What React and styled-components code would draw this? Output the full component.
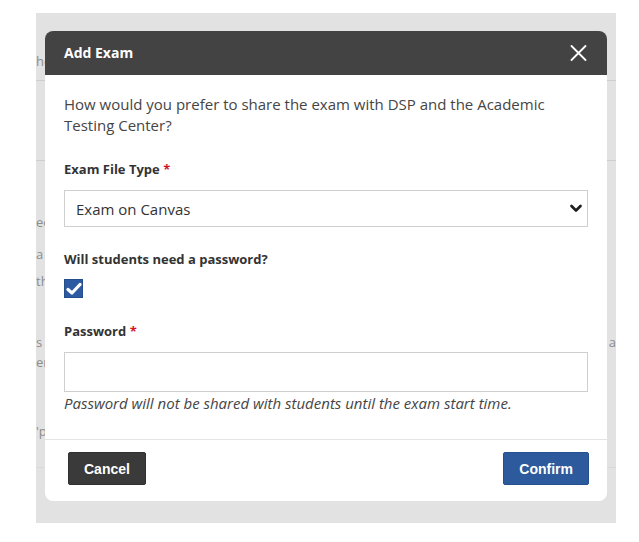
import React from "react";
import styled, { createGlobalStyle } from "styled-components";

const GlobalStyle = createGlobalStyle`
  html, body {
    margin: 0;
    padding: 0;
    background: #ffffff;
    font-family: "Open Sans", "Noto Sans", sans-serif;
  }
  * { box-sizing: border-box; }
`;

const Screen = styled.div`
  padding: 13px 0 0 36px;
`;

const Backdrop = styled.div`
  position: relative;
  width: 580px;
  height: 510px;
  background: #e2e2e2;
  overflow: hidden;
`;

/* page content sitting under the dimmed overlay */
const BehindPage = styled.div`
  display: flex;
  flex-direction: column;
  padding-top: 40px;
  font-size: 13px;
  line-height: 16px;
  color: #8c8c8c;
`;

const BehindRow = styled.div`
  display: flex;
  justify-content: space-between;
  height: 16px;
  margin-top: ${(p) => p.$gap || 0}px;
  white-space: nowrap;
`;

const BehindRule = styled.div`
  height: 1px;
  background: ${(p) => p.$tone || "#cdcdcd"};
  margin-top: ${(p) => p.$gap || 0}px;
`;

const Modal = styled.div`
  position: absolute;
  left: 9px;
  top: 18px;
  width: 562px;
  background: #ffffff;
  border-radius: 8px;
  display: flex;
  flex-direction: column;
`;

const Header = styled.div`
  height: 44px;
  background: #434343;
  border-radius: 8px 8px 0 0;
  display: flex;
  align-items: center;
  justify-content: space-between;
  padding: 0 19px 0 19px;
`;

const Title = styled.h2`
  margin: 0;
  font-size: 14px;
  font-weight: 700;
  color: #ffffff;
  line-height: 18px;
`;

const CloseButton = styled.button`
  border: 0;
  background: none;
  padding: 0;
  width: 20px;
  height: 20px;
  display: flex;
  align-items: center;
  justify-content: center;
  cursor: pointer;
`;

const Body = styled.div`
  display: flex;
  flex-direction: column;
  padding: 19px 19px 26px;
`;

const Intro = styled.p`
  margin: 0;
  font-size: 15px;
  line-height: 21px;
  color: #454545;
`;

const Label = styled.label`
  display: block;
  margin-top: ${(p) => p.$gap}px;
  font-size: 13px;
  font-weight: 700;
  line-height: 18px;
  color: #333333;
`;

const Required = styled.span`
  color: #d0191f;
`;

const SelectWrap = styled.div`
  position: relative;
  margin-top: 12px;
`;

const Select = styled.select`
  appearance: none;
  width: 100%;
  height: 37px;
  border: 1px solid #cfcfcf;
  border-radius: 0;
  background: #ffffff;
  padding: 0 30px 0 11px;
  font-family: "Open Sans", "Noto Sans", sans-serif;
  font-size: 15px;
  color: #333333;
`;

const Chevron = styled.svg`
  position: absolute;
  right: 6px;
  top: 14px;
  pointer-events: none;
`;

const CheckBox = styled.span`
  margin-top: 11px;
  width: 19px;
  height: 19px;
  background: #2d5ba3;
  border: 1px solid #254d8c;
  display: flex;
  align-items: center;
  justify-content: center;
`;

const TextInput = styled.input`
  margin-top: 12px;
  width: 100%;
  height: 40px;
  border: 1px solid #cfcfcf;
  padding: 0 11px;
  font-family: "Open Sans", "Noto Sans", sans-serif;
  font-size: 15px;
  outline: none;
`;

const Help = styled.p`
  margin: 1px 0 0;
  font-size: 15px;
  font-style: italic;
  line-height: 20px;
  color: #454545;
`;

const Footer = styled.div`
  display: flex;
  justify-content: space-between;
  align-items: center;
  border-top: 1px solid #e4e4e4;
  padding: 12px 18px 16px 23px;
`;

const Button = styled.button`
  height: 33px;
  padding: 0 15px;
  border: 1px solid ${(p) => (p.$primary ? "#24508f" : "#303030")};
  border-radius: 2px;
  background: ${(p) => (p.$primary ? "#2d5a9c" : "#3a3a3a")};
  color: #ffffff;
  font-family: "Liberation Sans", Arial, sans-serif;
  font-size: 14px;
  font-weight: 700;
  cursor: pointer;
`;

export default function App() {
  return (
    <>
      <GlobalStyle />
      <Screen>
        <Backdrop>
          <BehindPage>
            <BehindRow>he</BehindRow>
            <BehindRule $gap={11} />
            <BehindRule $gap={79} />
            <BehindRow $gap={53}>ee</BehindRow>
            <BehindRow $gap={16}>a</BehindRow>
            <BehindRow $gap={11}>th</BehindRow>
            <BehindRow $gap={45}>
              <span>s</span>
              <span>a</span>
            </BehindRow>
            <BehindRow $gap={4}>er</BehindRow>
            <BehindRow $gap={53}>'p</BehindRow>
            <BehindRule $gap={28} $tone="#d9d9d9" />
          </BehindPage>

          <Modal role="dialog" aria-label="Add Exam">
            <Header>
              <Title>Add Exam</Title>
              <CloseButton aria-label="Close">
                <svg width="17" height="16" viewBox="0 0 17 16">
                  <path
                    d="M1.5 1 L15.5 15 M15.5 1 L1.5 15"
                    stroke="#ffffff"
                    strokeWidth="1.8"
                    strokeLinecap="round"
                  />
                </svg>
              </CloseButton>
            </Header>

            <Body>
              <Intro>
                How would you prefer to share the exam with DSP and the Academic
                Testing Center?
              </Intro>

              <Label $gap={24}>
                Exam File Type <Required>*</Required>
              </Label>
              <SelectWrap>
                <Select defaultValue="canvas">
                  <option value="canvas">Exam on Canvas</option>
                  <option value="upload">Upload File</option>
                </Select>
                <Chevron width="12" height="9" viewBox="0 0 12 9">
                  <path
                    d="M1.5 2 L6 6.5 L10.5 2"
                    fill="none"
                    stroke="#1e1e1e"
                    strokeWidth="2.6"
                    strokeLinecap="round"
                    strokeLinejoin="round"
                  />
                </Chevron>
              </SelectWrap>

              <Label $gap={23}>Will students need a password?</Label>
              <CheckBox role="checkbox" aria-checked="true">
                <svg width="16" height="14" viewBox="0 0 16 14">
                  <path
                    d="M2 7.5 L6 11 L14 2.5"
                    fill="none"
                    stroke="#ffffff"
                    strokeWidth="3.2"
                    strokeLinecap="round"
                    strokeLinejoin="round"
                  />
                </svg>
              </CheckBox>

              <Label $gap={24}>
                Password <Required>*</Required>
              </Label>
              <TextInput type="text" aria-label="Password" />
              <Help>
                Password will not be shared with students until the exam start
                time.
              </Help>
            </Body>

            <Footer>
              <Button>Cancel</Button>
              <Button $primary>Confirm</Button>
            </Footer>
          </Modal>
        </Backdrop>
      </Screen>
    </>
  );
}
